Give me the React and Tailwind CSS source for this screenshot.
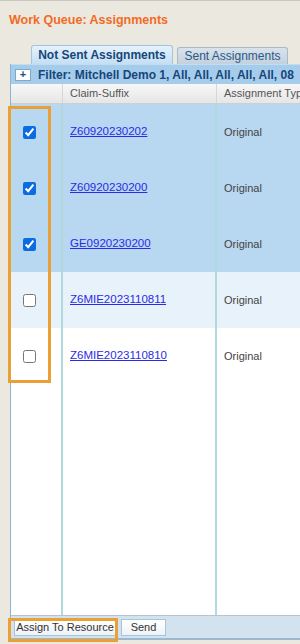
import React from 'react';

const rows = [
  { id: 'Z60920230202', type: 'Original', checked: true, bg: 'bg-[#b8d7f0]' },
  { id: 'Z60920230200', type: 'Original', checked: true, bg: 'bg-[#b8d7f0]' },
  { id: 'GE0920230200', type: 'Original', checked: true, bg: 'bg-[#b8d7f0]' },
  { id: 'Z6MIE2023110811', type: 'Original', checked: false, bg: 'bg-[#e8f2fa]' },
  { id: 'Z6MIE2023110810', type: 'Original', checked: false, bg: 'bg-white' },
];

export default function App() {
  return (
    <div
      className="relative w-[300px] h-[644px] overflow-hidden bg-[#ebe9df] border-t border-[#c9c7be] flex flex-col"
      style={{ fontFamily: '"Liberation Sans", Arial, sans-serif' }}
    >
      {/* Title */}
      <div className="pl-[9px] pt-[11px] h-[44px] text-[12.5px] leading-[16px] font-bold text-[#f26b25]">
        Work Queue: Assignments
      </div>

      {/* Tabs */}
      <div className="flex items-end h-[19px] pl-[31px] gap-[4px]">
        <div className="h-[19px] w-[142px] rounded-t-[3px] border border-b-0 border-[#9fc4e4] bg-gradient-to-b from-[#e6f2fb] to-[#c3dff4] flex items-center justify-center text-[12px] font-bold text-[#16467a]">
          Not Sent Assignments
        </div>
        <div className="h-[17px] w-[111px] rounded-t-[3px] border border-b-0 border-[#a9b9c9] bg-gradient-to-b from-[#d9e3ec] to-[#c3d1de] flex items-center justify-center text-[12px] text-[#2c5987]">
          Sent Assignments
        </div>
      </div>

      {/* Panel */}
      <div className="ml-[10px] flex-1 flex flex-col border-l border-[#8fb3d2] mb-[4px]">
        {/* Filter bar */}
        <div className="h-[20px] shrink-0 bg-[#a6ccec] border-t border-[#c2dcf2] flex items-center pl-[4px] gap-[7px] whitespace-nowrap overflow-hidden">
          <div className="shrink-0 w-[16px] h-[12px] bg-white border border-[#7fa9cc] flex items-center justify-center text-[11px] leading-none font-bold text-[#1d4f80]">
            +
          </div>
          <span className="shrink-0 text-[12px] font-bold text-[#16467a]">
            Filter: Mitchell Demo 1, All, All, All, All, All, 08
          </span>
        </div>

        {/* Header */}
        <div className="h-[20px] shrink-0 flex bg-gradient-to-b from-[#f7f7f7] to-[#e6e6e6] border-b border-[#cfcfcf] text-[11px] text-[#555] whitespace-nowrap overflow-hidden">
          <div className="w-[52px] shrink-0 border-r border-[#d6d6d6]" />
          <div className="w-[154px] shrink-0 border-r border-[#d6d6d6] pl-[7px] flex items-center">Claim-Suffix</div>
          <div className="flex-1 pl-[7px] flex items-center">Assignment Typ</div>
        </div>

        {/* Rows */}
        {rows.map((r) => (
          <div key={r.id} className={`h-[56px] shrink-0 flex ${r.bg} whitespace-nowrap`}>
            <div className="w-[52px] shrink-0 border-r-2 border-[#aedadd] pl-[12px] flex items-center">
              <input
                type="checkbox"
                defaultChecked={r.checked}
                className="w-[13px] h-[13px] m-0 accent-[#0b6be0]"
              />
            </div>
            <div className="w-[154px] shrink-0 border-r-2 border-[#aedadd] pl-[7px] flex items-center">
              <a href="#" className="text-[11.5px] text-[#2b2be6] underline">{r.id}</a>
            </div>
            <div className="flex-1 pl-[7px] flex items-center text-[11px] text-[#444]">{r.type}</div>
          </div>
        ))}

        {/* Filler */}
        <div className="flex-1 flex bg-white">
          <div className="w-[52px] shrink-0 border-r-2 border-[#aedadd]" />
          <div className="w-[154px] shrink-0 border-r-2 border-[#aedadd]" />
          <div className="flex-1" />
        </div>

        {/* Footer */}
        <div className="h-[25px] shrink-0 bg-[#d2e3ef] border-t border-[#b9c3cb] border-b-2 border-b-[#9cb8cf] flex items-center pl-[3px] gap-[5px]">
          <button className="h-[17px] w-[102px] bg-gradient-to-b from-white to-[#eef3f7] border border-[#a9c3d8] text-[11px] text-[#333] leading-none">
            Assign To Resource
          </button>
          <button className="h-[17px] w-[45px] bg-gradient-to-b from-white to-[#eef3f7] border border-[#a9c3d8] text-[11px] text-[#333] leading-none">
            Send
          </button>
        </div>
      </div>

      {/* Highlight boxes */}
      <div className="absolute left-[8px] top-[105px] w-[43px] h-[277px] border-[3px] border-[#eaa035] pointer-events-none" />
      <div className="absolute left-[8px] top-[617px] w-[110px] h-[24px] border-[3px] border-[#eaa035] pointer-events-none" />
    </div>
  );
}
